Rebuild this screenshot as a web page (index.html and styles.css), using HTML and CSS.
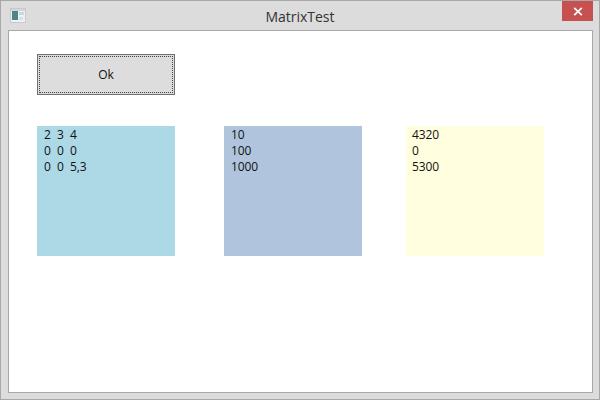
FILE: index.html
```html
<!DOCTYPE html>
<html lang="en">
<head>
<meta charset="utf-8">
<title>MatrixTest</title>
<link rel="stylesheet" href="styles.css">
</head>
<body>
<div class="window">
  <header class="titlebar">
    <svg class="app-icon" width="16" height="15" viewBox="0 0 16 15">
      <rect x="0" y="0" width="16" height="15" fill="#c9c9c9"/>
      <rect x="1" y="1" width="14" height="13" fill="#eef1f1"/>
      <rect x="1" y="1" width="14" height="2" fill="#cfd8d8"/>
      <rect x="2" y="3" width="6" height="9" fill="#4f8587"/>
      <rect x="9" y="4" width="5" height="3" fill="#c4dcdc"/>
      <rect x="9" y="9" width="4" height="3" fill="#d4e2e2"/>
    </svg>
    <span class="title">MatrixTest</span>
    <button class="close" aria-label="Close">
      <svg width="10" height="9" viewBox="0 0 10 9"><path d="M1.2 .8 8.8 8.2M8.8 .8 1.2 8.2" stroke="#fff" stroke-width="1.7" fill="none"/></svg>
    </button>
  </header>
  <main class="client">
    <button class="ok"><span class="ok-focus">Ok</span></button>
    <section class="panels">
      <div class="panel blue">
        <div class="matrix">
          <span>2</span><span>3</span><span>4</span>
          <span>0</span><span>0</span><span>0</span>
          <span>0</span><span>0</span><span>5,3</span>
        </div>
      </div>
      <div class="panel steel">
        <div>10</div><div>100</div><div>1000</div>
      </div>
      <div class="panel yellow">
        <div>4320</div><div>0</div><div>5300</div>
      </div>
    </section>
  </main>
</div>
</body>
</html>
```
FILE: styles.css
```css
* { box-sizing: border-box; }
html, body { margin: 0; padding: 0; }
body {
  width: 600px;
  height: 400px;
  overflow: hidden;
  font-family: "Open Sans", "Noto Sans", sans-serif;
  font-size: 12px;
  line-height: 16px;
  letter-spacing: -0.1px;
  color: #111;
}
.window {
  width: 600px;
  height: 400px;
  display: flex;
  flex-direction: column;
  background: #dcdcdc;
  border: 1px solid #a8a8a8;
  padding: 0 6px 6px 7px;
}
.titlebar {
  height: 29px;
  flex: none;
  display: flex;
  align-items: flex-start;
  position: relative;
}
.app-icon { margin: 7px 0 0 2px; }
.title {
  position: absolute;
  left: 0;
  right: 1px;
  top: 6px;
  text-align: center;
  font-size: 14px;
  line-height: 19px;
  letter-spacing: -0.03px;
  color: #333;
}
.close {
  position: absolute;
  right: 0;
  top: 0;
  width: 31px;
  height: 20px;
  padding: 0;
  border: 0;
  background: #c75050;
  display: flex;
  align-items: center;
  justify-content: center;
}
.client {
  flex: 1;
  background: #fff;
  border: 1px solid #a8a8a8;
  padding: 23px 0 0 28px;
}
.ok {
  display: block;
  width: 138px;
  height: 41px;
  padding: 1px;
  background: #dddddd;
  border: 1px solid #707070;
  font: inherit;
  letter-spacing: inherit;
  color: inherit;
}
.ok-focus {
  display: flex;
  align-items: center;
  justify-content: center;
  height: 100%;
  border: 1px dotted #444;
}
.panels {
  display: flex;
  margin-top: 31px;
}
.panel {
  width: 138px;
  height: 130px;
  padding: 1px 6px;
}
.blue { background: #add8e6; padding-left: 7px; }
.steel { background: #b0c4de; margin-left: 49px; padding-left: 7px; }
.yellow { background: #ffffe0; margin-left: 44px; }
.matrix {
  display: grid;
  grid-template-columns: 13px 13px auto;
}
```
